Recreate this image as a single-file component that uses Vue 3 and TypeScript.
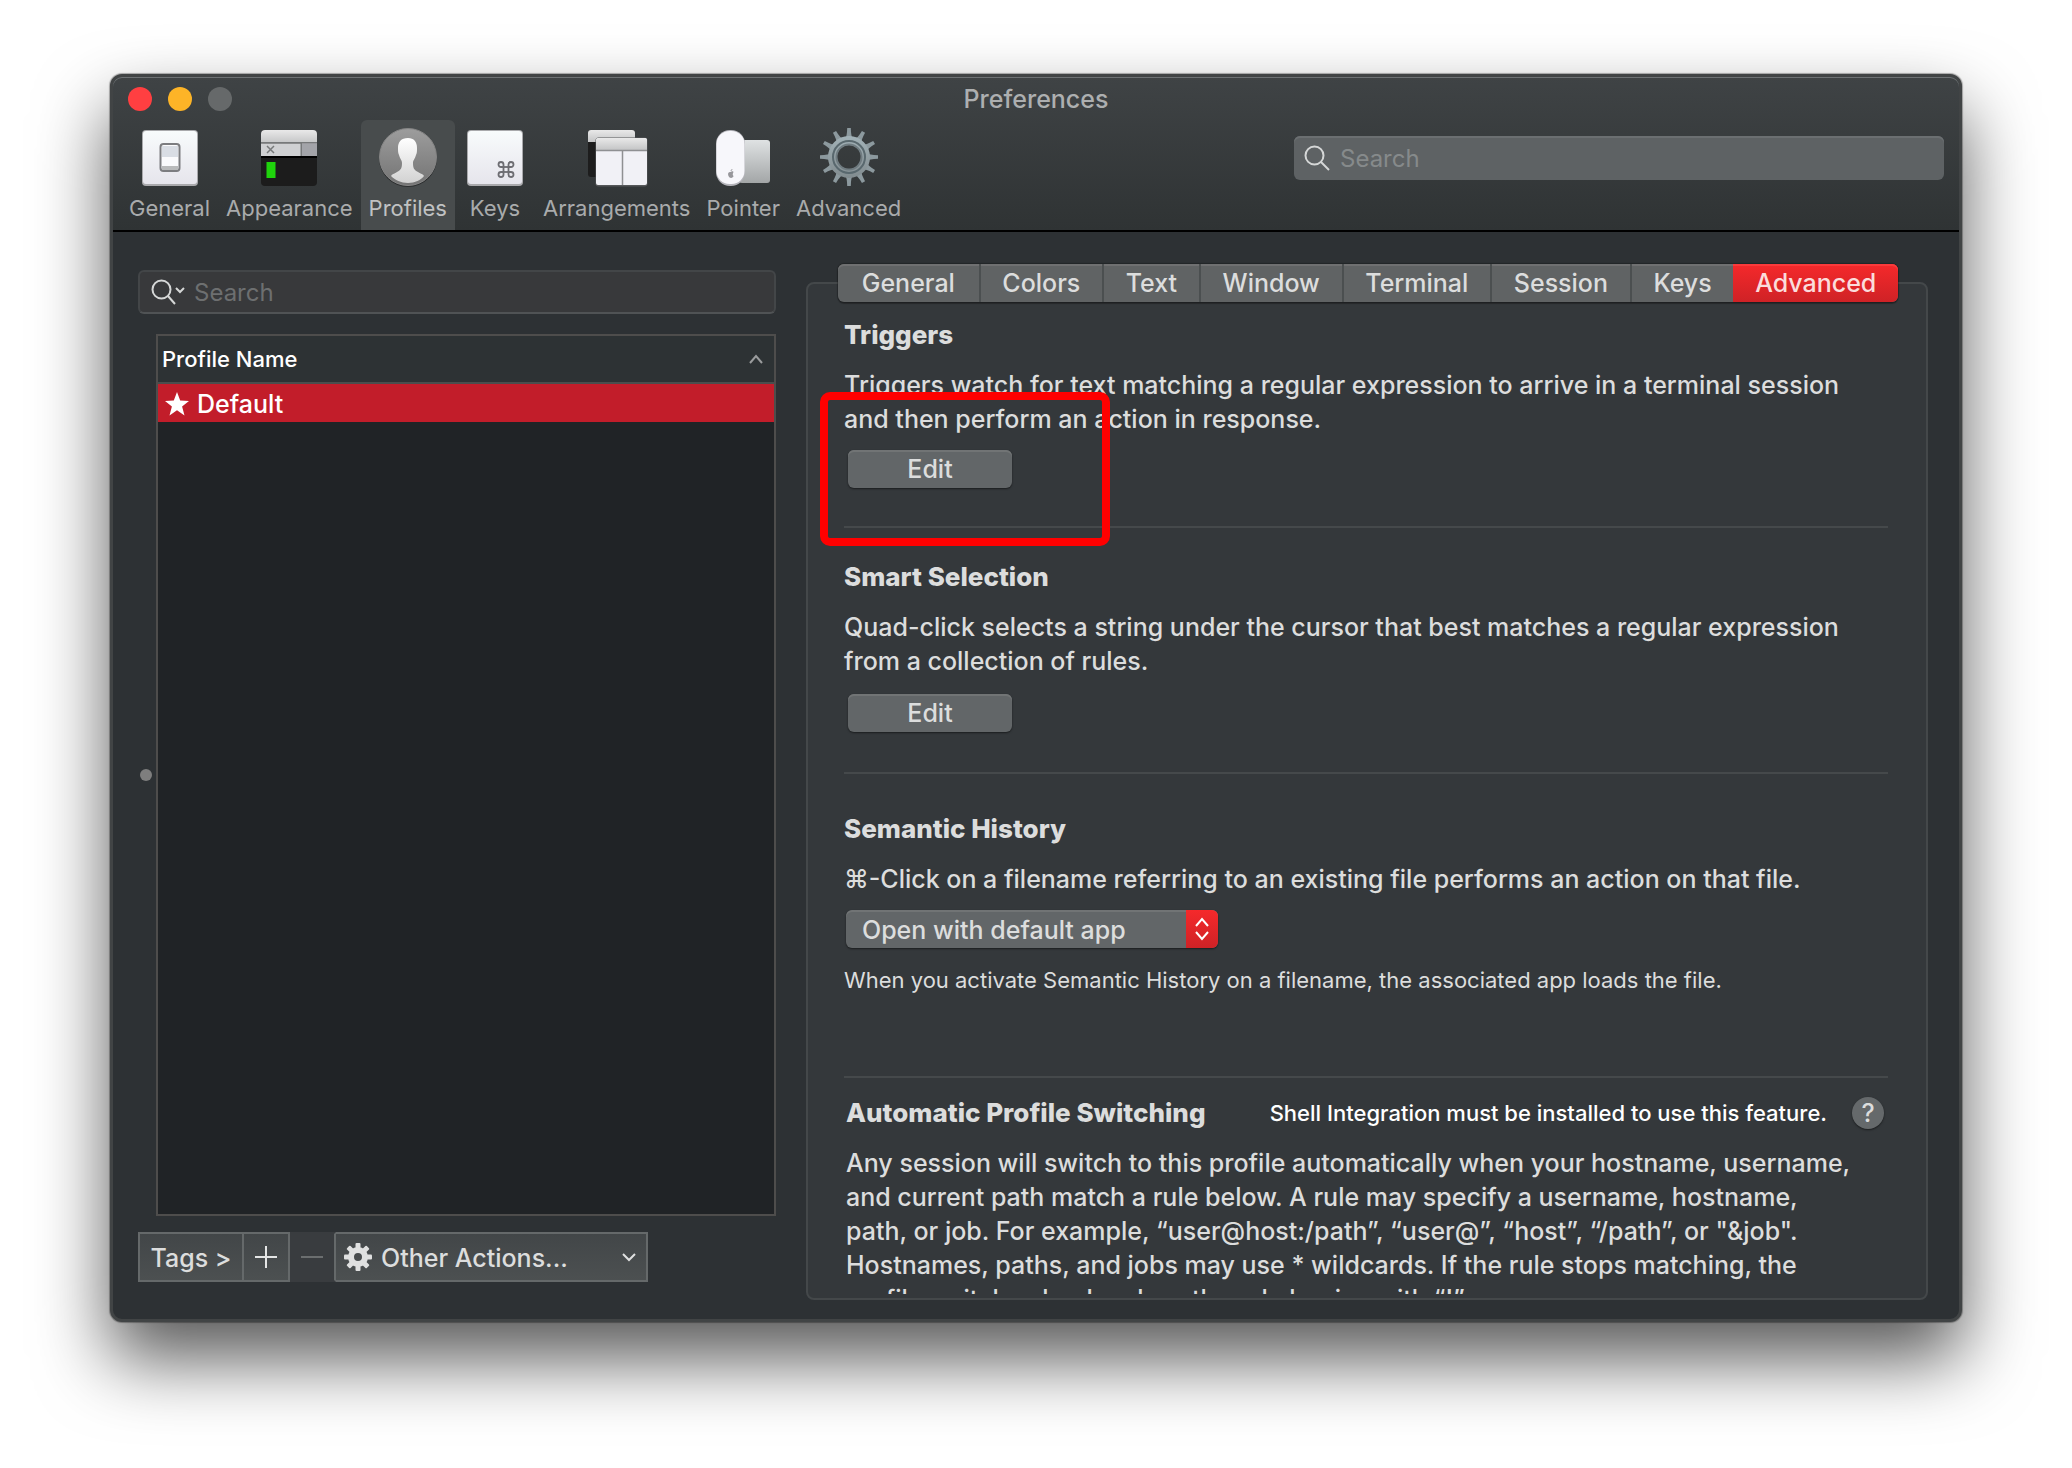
<script setup lang="ts">
import { ref } from 'vue'

const toolbarItems = ['General', 'Appearance', 'Profiles', 'Keys', 'Arrangements', 'Pointer', 'Advanced']
const activePane = ref('Profiles')

const tabs = ['General', 'Colors', 'Text', 'Window', 'Terminal', 'Session', 'Keys', 'Advanced']
const activeTab = ref('Advanced')

const profiles = ['Default']
const selectedProfile = ref('Default')
const historyAction = ref('Open with default app')

const gearTeeth = Array.from({ length: 12 }, (_, i) => i * 30)
const smallTeeth = Array.from({ length: 8 }, (_, i) => i * 45)
</script>

<template>
  <main class="desktop">
    <section class="window" aria-label="Preferences">
      <header class="chrome">
        <div class="titlebar">
          <div class="lights">
            <button class="light close" aria-label="Close"></button>
            <button class="light minimize" aria-label="Minimize"></button>
            <button class="light zoom" aria-label="Zoom" disabled></button>
          </div>
          <h1>Preferences</h1>
        </div>
        <div class="toolbar">
          <nav class="panes">
            <button
              v-for="item in toolbarItems"
              :key="item"
              class="pane"
              :class="{ active: item === activePane }"
              @click="activePane = item"
            >
              <svg v-if="item === 'General'" class="pane-icon" viewBox="0 0 64 64">
                <defs>
                  <linearGradient id="plate" x1="0" y1="0" x2="0" y2="1">
                    <stop offset="0" stop-color="#f8fbfc" />
                    <stop offset="1" stop-color="#e6e5ec" />
                  </linearGradient>
                </defs>
                <rect x="4" y="5" width="56" height="56" rx="4" fill="#a9a9ac" />
                <rect x="5" y="6" width="54" height="53" rx="3" fill="url(#plate)" />
                <rect x="22.500" y="19" width="19" height="27" rx="3" fill="#fafafc" stroke="#7c7d80" stroke-width="2" />
                <rect x="24" y="21" width="16" height="11" fill="#d9dde4" />
                <rect x="24" y="41" width="16" height="4" fill="#b9babb" />
              </svg>
              <svg v-else-if="item === 'Appearance'" class="pane-icon" viewBox="0 0 64 64">
                <defs>
                  <linearGradient id="bar" x1="0" y1="0" x2="0" y2="1">
                    <stop offset="0" stop-color="#e9e9e9" />
                    <stop offset="1" stop-color="#c4c5c6" />
                  </linearGradient>
                </defs>
                <rect x="4" y="5" width="56" height="56" rx="4" fill="#1c1c1c" />
                <path d="M4 18V9a4 4 0 0 1 4-4h48a4 4 0 0 1 4 4v9z" fill="url(#bar)" />
                <rect x="4" y="17" width="56" height="1.500" fill="#77797a" />
                <rect x="4" y="18.500" width="56" height="13" fill="#cfd0d2" />
                <rect x="44" y="18.500" width="16" height="13" fill="#a3a4a9" />
                <rect x="43.500" y="18" width="1.500" height="13" fill="#77797a" />
                <path d="M10 21l7 7M17 21l-7 7" stroke="#77797a" stroke-width="1.500" />
                <rect x="4" y="31" width="56" height="2" fill="#000" />
                <rect x="9.500" y="37" width="9" height="16" fill="#1fd30c" />
              </svg>
              <svg v-else-if="item === 'Profiles'" class="pane-icon" viewBox="0 0 64 64">
                <defs>
                  <linearGradient id="disc" x1="0" y1="0" x2="0" y2="1">
                    <stop offset="0" stop-color="#9d9d9d" />
                    <stop offset="1" stop-color="#747474" />
                  </linearGradient>
                  <linearGradient id="bust" x1="0" y1="0" x2="0" y2="1">
                    <stop offset="0" stop-color="#ffffff" />
                    <stop offset="1" stop-color="#d2d2d2" />
                  </linearGradient>
                </defs>
                <circle cx="32" cy="33" r="29" fill="#2c2e2f" />
                <circle cx="32" cy="32" r="28.500" fill="url(#disc)" stroke="#858585" />
                <path
                  d="M32 13c-7 0-10 4-10 10 0 3 0 5 1 7 1 4 3 5 3 8 0 5-1 7-5 9-3 2-5 2-6 4 4 4 10 7 17 7s13-3 16-7c-1-2-3-2-6-4-4-2-5-4-5-9 0-3 2-4 3-8 1-2 1-4 1-7 0-6-3-10-9-10z"
                  fill="url(#bust)"
                />
              </svg>
              <svg v-else-if="item === 'Keys'" class="pane-icon" viewBox="0 0 64 64">
                <rect x="4" y="5" width="56" height="56" rx="4" fill="#a9a9ac" />
                <rect x="5" y="6" width="54" height="53" rx="3" fill="url(#plate)" />
                <g fill="none" stroke="#6d6d72" stroke-width="1.800">
                  <rect x="40.500" y="42" width="5" height="5" />
                  <path d="M40.500 42h-2.500a2.500 2.500 0 1 1 2.500-2.500zM45.500 42v-2.500a2.500 2.500 0 1 1 2.500 2.500zM45.500 47h2.500a2.500 2.500 0 1 1-2.500 2.500zM40.500 47v2.500a2.500 2.500 0 1 1-2.500-2.500z" />
                </g>
              </svg>
              <svg v-else-if="item === 'Arrangements'" class="pane-icon" viewBox="0 0 64 64">
                <rect x="3" y="5" width="47" height="47" rx="3" fill="#1d1d1d" />
                <path d="M3 17V8a3 3 0 0 1 3-3h41a3 3 0 0 1 3 3v9z" fill="url(#bar)" />
                <rect x="10.500" y="12.500" width="52" height="49" rx="3" fill="#56585a" />
                <rect x="11" y="13" width="51" height="47" rx="2" fill="#f1f1f6" />
                <path d="M11 25V16a3 3 0 0 1 3-3h45a3 3 0 0 1 3 3v9z" fill="url(#bar)" />
                <path d="M11 25.500h51M37.500 25v35" stroke="#8f9092" stroke-width="1.500" />
              </svg>
              <svg v-else-if="item === 'Pointer'" class="pane-icon" viewBox="0 0 64 64">
                <defs>
                  <linearGradient id="pad" x1="0" y1="0" x2="0" y2="1">
                    <stop offset="0" stop-color="#dfe2e3" />
                    <stop offset="1" stop-color="#a3a6a7" />
                  </linearGradient>
                </defs>
                <rect x="28" y="15" width="31" height="43" rx="3" fill="url(#pad)" />
                <rect x="5" y="5" width="29" height="56" rx="14" fill="#b4b4ba" />
                <rect x="5.500" y="6" width="28" height="53" rx="13" fill="#f7f7fb" />
                <path d="M19.500 47c1-1 3-1 3 0-1 2-1 3 0 4 0 2-4 3-5 0-1-3 0-4 2-4z" fill="#97979b" />
                <path d="M19.500 46c0-1 1-2 2-2 0 1-1 2-2 2z" fill="#97979b" />
              </svg>
              <svg v-else class="pane-icon" viewBox="0 0 64 64">
                <defs>
                  <linearGradient id="steel" gradientUnits="userSpaceOnUse" x1="0" y1="2" x2="0" y2="62">
                    <stop offset="0" stop-color="#a9bac0" />
                    <stop offset="1" stop-color="#7a8386" />
                  </linearGradient>
                </defs>
                <g fill="#8c999e">
                  <path
                    v-for="angle in gearTeeth"
                    :key="angle"
                    d="M28 14q2-2 2.200-11h3.600q.2 9 2.200 11z"
                    :transform="`rotate(${angle} 32 32)`"
                  />
                </g>
                <circle cx="32" cy="32" r="16.500" fill="none" stroke="url(#steel)" stroke-width="9" />
                <circle cx="32" cy="32" r="16" fill="none" stroke="#59686e" stroke-width="2" />
                <circle cx="32" cy="32" r="12.500" fill="none" stroke="#6f7b80" stroke-width="2" />
              </svg>
              <span>{{ item }}</span>
            </button>
          </nav>
          <label class="search search-top">
            <svg class="lens" viewBox="0 0 26 26"><circle cx="10.500" cy="10.500" r="9" /><path d="M17 17l8 8" /></svg>
            <input type="search" placeholder="Search" aria-label="Search preferences" />
          </label>
        </div>
      </header>

      <div class="body">
        <aside class="sidebar">
          <label class="search search-side">
            <svg class="lens-menu" viewBox="0 0 36 26">
              <circle cx="10.500" cy="10.500" r="9" /><path d="M17 17l7 8M25 9l4 4 4-4" />
            </svg>
            <input type="search" placeholder="Search" aria-label="Search profiles" />
          </label>

          <div class="list-row">
            <span class="grip"></span>
            <div class="list">
              <table>
                <thead>
                  <tr>
                    <th scope="col">
                      <div class="head-cell">
                        Profile Name
                        <svg class="sort" viewBox="0 0 16 10"><path d="M2 9l6-7 6 7" /></svg>
                      </div>
                    </th>
                  </tr>
                </thead>
                <tbody>
                  <tr
                    v-for="profile in profiles"
                    :key="profile"
                    :class="{ selected: profile === selectedProfile }"
                    @click="selectedProfile = profile"
                  >
                    <td>
                      <div class="name-cell">
                        <svg class="star" viewBox="0 0 24 24">
                          <path d="M12 0l3.200 8.500 8.800.4-6.900 5.600 2.400 8.900L12 18.300l-7.500 5.100 2.400-8.900L0 8.900l8.800-.4z" />
                        </svg>
                        {{ profile }}
                      </div>
                    </td>
                  </tr>
                </tbody>
              </table>
            </div>
          </div>

          <div class="actions">
            <button class="action tags">Tags &gt;</button>
            <button class="action square" aria-label="Add profile">
              <svg viewBox="0 0 24 24"><path d="M12 1v22M1 12h22" /></svg>
            </button>
            <button class="action square" aria-label="Remove profile" disabled>
              <svg viewBox="0 0 24 24"><path d="M1 12h22" /></svg>
            </button>
            <button class="action other">
              <svg class="cog" viewBox="0 0 30 30">
                <rect
                  v-for="angle in smallTeeth"
                  :key="angle"
                  x="12.500"
                  y="1"
                  width="5"
                  height="7"
                  rx="1"
                  :transform="`rotate(${angle} 15 15)`"
                />
                <circle class="cog-ring" cx="15" cy="15" r="7" />
              </svg>
              <span>Other Actions...</span>
              <svg class="chevron" viewBox="0 0 16 10"><path d="M2 2l6 6 6-6" /></svg>
            </button>
          </div>
        </aside>

        <div class="detail">
          <nav class="tabs">
            <button
              v-for="tab in tabs"
              :key="tab"
              class="tab"
              :class="{ active: tab === activeTab }"
              @click="activeTab = tab"
            >
              {{ tab }}
            </button>
          </nav>

          <div class="panel">
            <section class="group triggers">
              <h2>Triggers</h2>
              <p>
                Triggers watch for text matching a regular expression to arrive in a terminal session<br />and then
                perform an action in response.
              </p>
              <button class="push">Edit</button>
              <span class="callout"></span>
            </section>
            <hr />
            <section class="group smart">
              <h2>Smart Selection</h2>
              <p>
                Quad-click selects a string under the cursor that best matches a regular expression<br />from a
                collection of rules.
              </p>
              <button class="push">Edit</button>
            </section>
            <hr />
            <section class="group semantic">
              <h2>Semantic History</h2>
              <p id="history-label">⌘-Click on a filename referring to an existing file performs an action on that file.</p>
              <div class="popup">
                <select v-model="historyAction" aria-labelledby="history-label">
                  <option>Open with default app</option>
                </select>
                <svg class="stepper" viewBox="0 0 32 38"><path d="M10 16l6-7 6 7M10 22l6 7 6-7" /></svg>
              </div>
              <p class="hint">When you activate Semantic History on a filename, the associated app loads the file.</p>
            </section>
            <hr />
            <section class="group switching">
              <div class="switching-head">
                <h2>Automatic Profile Switching</h2>
                <p class="notice">Shell Integration must be installed to use this feature.</p>
                <button class="help" aria-label="Help">?</button>
              </div>
              <p class="clipped">
                Any session will switch to this profile automatically when your hostname, username,<br />and current
                path match a rule below. A rule may specify a username, hostname,<br />path, or job. For example,
                “user@host:/path”, “user@”, “host”, “/path”, or "&amp;job".<br />Hostnames, paths, and jobs may use *
                wildcards. If the rule stops matching, the<br />profile switches back unless the rule begins with “!”
              </p>
            </section>
          </div>
        </div>
      </div>
    </section>
  </main>
</template>

<style>
body {
  margin: 0;
  background: #fff;
}
</style>

<style scoped>
.desktop {
  box-sizing: border-box;
  min-height: 100vh;
  padding: 74px 110px 144px;
  overflow: hidden;
  font-family: Inter, 'Liberation Sans', sans-serif;
  font-size: 25px;
  font-weight: 500;
  line-height: 34px;
  color: #dcdddd;
}
button,
input,
select {
  font: inherit;
  color: inherit;
  margin: 0;
  padding: 0;
  border: 0;
  background: none;
  outline: none;
}
h1,
h2,
p {
  margin: 0;
}
svg {
  display: block;
  flex: none;
}
.window {
  border: 3px solid #414445;
  border-radius: 12px;
  background: #2d3134;
  box-shadow:
    0 0 1px 1px rgba(0, 0, 0, 0.3),
    0 37px 72px rgba(0, 0, 0, 0.66);
}
.chrome {
  border-bottom: 2px solid #000;
  border-radius: 9px 9px 0 0;
  background: linear-gradient(#3f4345, #2f3334);
  box-shadow: inset 0 1px 0 #6e7274;
}
.titlebar {
  display: grid;
  grid-template-columns: 1fr auto 1fr;
  align-items: center;
  height: 43px;
  padding: 0 15px;
}
.lights {
  display: flex;
  gap: 16px;
}
.light {
  width: 24px;
  height: 24px;
  border-radius: 50%;
}
.close {
  background: #ff3f41;
}
.minimize {
  background: #fdb427;
}
.zoom {
  background: #66696a;
}
h1 {
  font-size: 25px;
  font-weight: 500;
  color: #adafb0;
}
.toolbar {
  display: flex;
  justify-content: space-between;
  align-items: flex-start;
  height: 110px;
  padding: 0 15px 0 8px;
}
.panes {
  display: flex;
  height: 110px;
}
.pane {
  display: flex;
  flex-direction: column;
  align-items: center;
  gap: 5px;
  min-width: 78px;
  padding: 5px 8px 0;
  border-radius: 6px 6px 0 0;
  font-size: 22px;
  font-weight: 400;
  line-height: 28px;
  color: #a9abac;
}
.pane.active {
  background: #484c4d;
  color: #c0c2c3;
}
.pane-icon {
  width: 64px;
  height: 64px;
}
.search {
  display: flex;
  align-items: center;
  box-sizing: border-box;
  height: 44px;
  border-radius: 6px;
  font-size: 24px;
  font-weight: 400;
}
.search input {
  flex: 1;
  min-width: 0;
  height: 34px;
  padding-top: 2px;
  appearance: none;
}
.search-top {
  width: 650px;
  margin-top: 16px;
  gap: 10px;
  padding: 0 10px;
  background: #5e6264;
  box-shadow: inset 0 2px 0 #6b6f71;
}
.search-top input::placeholder {
  color: #868a8b;
  opacity: 1;
}
.search-side {
  gap: 7px;
  padding: 0 10px 0 11px;
  border: 2px solid #434648;
  border-bottom-color: #505355;
  background: #38393b;
}
.search-side input::placeholder {
  color: #6d6f70;
  opacity: 1;
}
.lens,
.lens-menu {
  height: 26px;
  fill: none;
  stroke: #d5d7d7;
  stroke-width: 2;
}
.lens {
  width: 26px;
}
.lens-menu {
  width: 36px;
}
.body {
  display: grid;
  grid-template-columns: 29fr 51fr;
  gap: 30px;
  padding: 32px 31px 19px 25px;
}
.sidebar {
  display: flex;
  flex-direction: column;
  padding: 6px 0 18px;
}
.list-row {
  display: flex;
  flex: 1;
  align-items: center;
  margin: 20px 0 16px;
}
.grip {
  width: 12px;
  height: 12px;
  margin: 0 4px 0 2px;
  border-radius: 50%;
  background: #7e7e7e;
}
.list {
  flex: 1;
  align-self: stretch;
  border: 2px solid #4e4d4c;
  background: #202326;
}
table {
  width: 100%;
  border-collapse: collapse;
}
th,
td {
  padding: 0;
  text-align: left;
}
.head-cell {
  display: flex;
  justify-content: space-between;
  align-items: center;
  height: 46px;
  padding: 0 10px 0 4px;
  border-bottom: 2px solid #4b4d4d;
  background: #2d3234;
  font-size: 22px;
  font-weight: 500;
  color: #fff;
}
.sort,
.chevron {
  width: 16px;
  height: 10px;
  fill: none;
  stroke: #9a9c9d;
  stroke-width: 2;
}
.name-cell {
  display: flex;
  align-items: center;
  gap: 8px;
  box-sizing: border-box;
  height: 38px;
  padding: 2px 0 0 7px;
  color: #fff;
}
.selected {
  background: #c21d2a;
}
.star {
  width: 24px;
  height: 24px;
  fill: #fff;
}
.actions {
  display: flex;
  align-self: flex-start;
  height: 50px;
}
.action {
  display: flex;
  align-items: center;
  justify-content: center;
  box-sizing: border-box;
  border: 2px solid #65696a;
  border-left-width: 0;
  background: linear-gradient(#424648, #4c5051);
}
.tags {
  width: 106px;
  padding-top: 2px;
  border-left-width: 2px;
}
.square {
  width: 46px;
}
.square svg {
  width: 24px;
  height: 24px;
  fill: none;
  stroke: #e4e5e5;
  stroke-width: 2;
}
.square:disabled {
  border-top-color: #393c3f;
  border-bottom-color: #393c3f;
  background: #393c3f;
}
.square:disabled svg {
  stroke: #6b6e6f;
}
.other {
  width: 312px;
  justify-content: flex-start;
  gap: 8px;
  padding: 0 9px 0 7px;
}
.other span {
  padding-top: 2px;
}
.cog {
  width: 30px;
  height: 30px;
  fill: #dfe0e0;
}
.cog-ring {
  fill: none;
  stroke: #dfe0e0;
  stroke-width: 6;
}
.other .chevron {
  margin-left: auto;
  stroke: #dfe0e0;
}
.detail {
  display: flex;
  flex-direction: column;
  min-width: 0;
}
.tabs {
  display: flex;
  position: relative;
  z-index: 1;
  margin: 0 30px -20px 32px;
  border-radius: 6px;
  background: #606364;
  box-shadow:
    0 0 1px 1px rgba(0, 0, 0, 0.25),
    0 2px 1px rgba(0, 0, 0, 0.25);
}
.tab {
  flex: 1 1 auto;
  height: 38px;
  box-shadow: inset 0 2px 0 #6f7071;
}
.tab + .tab {
  border-left: 2px solid #4b4f50;
}
.tab:first-child {
  padding: 0 2px;
  border-radius: 6px 0 0 6px;
}
.tab:last-child {
  border-radius: 0 6px 6px 0;
}
.tab.active {
  border-left: 0;
  background: linear-gradient(#f5292b, #cf2226);
  box-shadow: inset 0 2px 0 #fb3a3b;
  color: #fbdcdc;
}
.panel {
  padding: 34px 38px 4px 36px;
  border: 2px solid #44484a;
  border-radius: 8px;
  background: #34383b;
}
hr {
  height: 2px;
  margin: 0;
  border: 0;
  background: #45494b;
}
.group {
  display: flex;
  flex-direction: column;
  align-items: flex-start;
}
h2 {
  margin-bottom: 16px;
  font-size: 26px;
  font-weight: 800;
}
.group p {
  white-space: nowrap;
}
.push {
  width: 164px;
  height: 38px;
  margin: 14px 0 0 4px;
  border-radius: 6px;
  background: #626668;
  box-shadow:
    inset 0 2px 0 #717475,
    0 1px 2px rgba(0, 0, 0, 0.5);
}
.triggers {
  position: relative;
  padding-bottom: 38px;
}
.callout {
  position: absolute;
  left: -24px;
  top: 74px;
  box-sizing: border-box;
  width: 290px;
  height: 154px;
  border: 8px solid #f00;
  border-radius: 10px;
  pointer-events: none;
}
.smart {
  padding: 32px 0 40px;
}
.smart .push {
  margin-top: 16px;
}
.semantic {
  padding: 38px 0 82px;
}
.popup {
  position: relative;
  width: 372px;
  height: 38px;
  margin: 14px 0 18px 2px;
  border-radius: 6px;
  overflow: hidden;
  background: #626668;
  box-shadow: 0 1px 2px rgba(0, 0, 0, 0.5);
}
.popup select {
  display: block;
  width: 100%;
  height: 38px;
  padding: 2px 0 0 16px;
  appearance: none;
  border-radius: 6px;
  box-shadow: inset 0 2px 0 #717475;
}
.stepper {
  position: absolute;
  top: 0;
  right: 0;
  width: 32px;
  height: 38px;
  background: linear-gradient(#f5292b, #cf2226);
  fill: none;
  stroke: #fff;
  stroke-width: 2;
  pointer-events: none;
}
.hint {
  font-size: 22px;
  font-weight: 400;
  line-height: 28px;
}
.switching {
  padding: 18px 0 0 2px;
}
.switching-head {
  display: flex;
  align-items: center;
  align-self: stretch;
  height: 34px;
  margin-bottom: 16px;
}
.switching-head h2 {
  margin: 0;
}
.notice {
  margin-left: auto;
  font-size: 22px;
  color: #fff;
}
.help {
  width: 32px;
  height: 32px;
  margin: 0 4px 0 25px;
  border-radius: 50%;
  background: #65696b;
  box-shadow: 0 1px 2px rgba(0, 0, 0, 0.5);
  line-height: 32px;
}
.clipped {
  height: 148px;
  overflow: hidden;
}
</style>
